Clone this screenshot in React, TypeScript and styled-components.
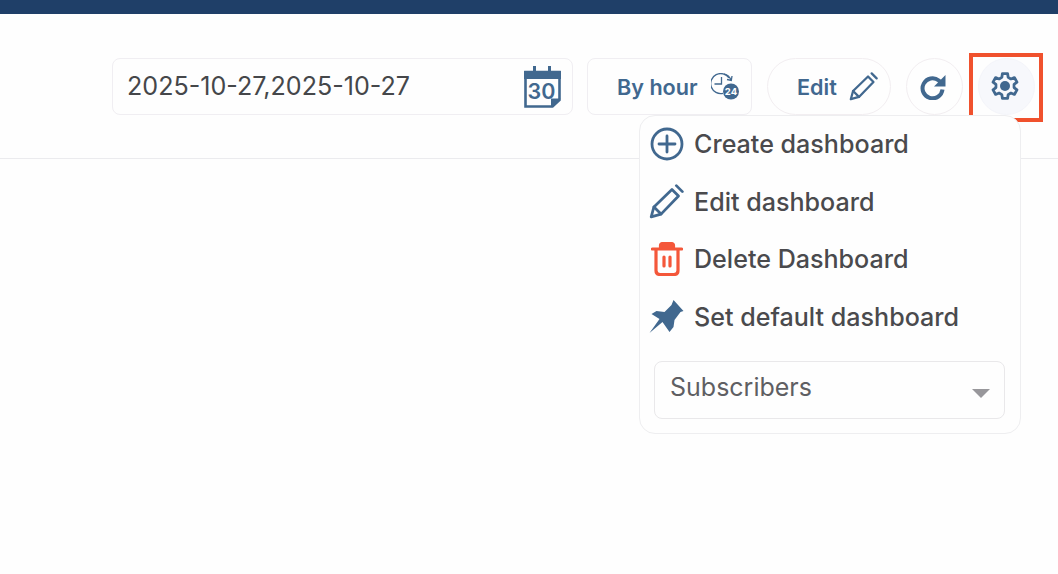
import React from "react";
import styled, { createGlobalStyle } from "styled-components";

const Global = createGlobalStyle`
  html, body { margin: 0; padding: 0; background: #fefefe; }
  body { font-family: Inter, "Liberation Sans", sans-serif; width: 1058px; height: 574px; overflow: hidden; }
`;
const BLUE = "#41688f";
const Page = styled.div`position: relative; width: 1058px; height: 574px;`;
const TopBar = styled.div`height: 14px; background: #1f3f68;`;
const Toolbar = styled.header`
  height: 145px; box-sizing: border-box; border-bottom: 1px solid #ebebee;
  display: flex; align-items: flex-start; gap: 15px;
  padding: 44px 23px 0 112px;
`;
const DateField = styled.div`
  width: 461px; height: 57px; margin-right: -1px; box-sizing: border-box; border: 1px solid #f0eef2; border-radius: 8px;
  display: flex; align-items: center; justify-content: space-between; padding: 0 11px 2px 14px;
  font-size: 25.1px; color: #45474a;
`;
const CalendarIcon = styled.svg`margin-top: 2px;`;
const RangeButton = styled.div`
  width: 165px; height: 57px; box-sizing: border-box; border: 1px solid #f0eef2; border-radius: 8px;
  display: flex; align-items: center; gap: 13px; padding-left: 29px;
  font-size: 21.6px; font-weight: 600; color: ${BLUE};
`;
const PillButton = styled.div`
  width: 124px; height: 57px; box-sizing: border-box; border: 1px solid #f2eef1; border-radius: 29px;
  display: flex; align-items: center; gap: 12px; padding-left: 29px;
  font-size: 21.6px; font-weight: 600; color: ${BLUE};
`;
const RoundButton = styled.div<{ $active?: boolean }>`
  position: relative; width: 57px; height: 57px; box-sizing: border-box; border-radius: 50%;
  border: 1px solid ${p => (p.$active ? "#f4f5fa" : "#f2eef1")};
  background: ${p => (p.$active ? "#f7f8fc" : "transparent")};
  display: flex; align-items: center; justify-content: center;
`;
const RefreshIcon = styled.svg`margin: 0 3px 0 0;`;
const GearIcon = styled.svg`margin: 0 3px 2px 0;`;
const Highlight = styled.div`
  position: absolute; left: -10px; top: -6px; width: 74px; height: 69px; box-sizing: border-box;
  border: 4px solid #f0512d;
`;
const Menu = styled.div`
  position: absolute; left: 639px; top: 115px; width: 382px; height: 319px; box-sizing: border-box;
  border: 1px solid #eeeef0; border-radius: 16px; background: #fefefe;
  padding: 0 15px 0 9px;
`;
const MenuItem = styled.div`
  height: 57.5px; display: flex; align-items: center; gap: 10px; padding-bottom: 1px; margin-bottom: -1px;
  font-size: 25.1px; font-weight: 500; color: #4a4a4d;
  &:first-child { margin-top: -0.5px; }
`;
const IconSlot = styled.span`width: 35px; height: 36px; display: flex; align-items: center; justify-content: center; flex: none;`;
const Select = styled.div`
  margin: 15.5px 0 0 5px; height: 58px; box-sizing: border-box; border: 1px solid #e9e8ea; border-radius: 8px;
  display: flex; align-items: center; justify-content: space-between; padding: 0 14px 6px 15px;
  font-size: 25px; color: #5f5f63;
`;
const Caret = styled.span`
  width: 0; height: 0; margin-top: 12px; border-left: 9px solid transparent; border-right: 9px solid transparent;
  border-top: 9px solid #98979b;
`;

const Pencil = ({ size }: { size: number }) => (
  <svg width={size} height={size} viewBox="0 0 32 32" fill="none" stroke={BLUE} strokeWidth="2.5" strokeLinejoin="round" strokeLinecap="round">
    <path d="M2 30 L4.500 21 L21 5 L27 11 L11 27.500 Z" />
    <path d="M4.500 21 L11 27.500" />
    <path d="M25 1.500 L30.500 7" />
  </svg>
);

const gearPath = (() => {
  const pts: string[] = [];
  for (let k = 0; k < 6; k++) {
    const a = -90 + 60 * k;
    const add = (deg: number, r: number) => {
      const t = ((a + deg) * Math.PI) / 180;
      pts.push(`${(14 + r * Math.cos(t)).toFixed(2)} ${(14 + r * Math.sin(t)).toFixed(2)}`);
    };
    add(-20, 9.2);
    add(-12, 12.6);
    add(12, 12.6);
    add(20, 9.2);
  }
  return `M${pts.join("L")}Z`;
})();

export default function App() {
  return (
    <Page>
      <Global />
      <TopBar />
      <Toolbar>
        <DateField>
          <span>2025-10-27,2025-10-27</span>
          <CalendarIcon width="37" height="42" viewBox="0 0 37 42">
            <path d="M1.500 6h34v28l-7 6.500H1.500z" fill="none" stroke={BLUE} strokeWidth="2.600" />
            <rect x="0" y="5" width="37" height="8" fill={BLUE} />
            <rect x="9" y="0" width="3" height="8" fill={BLUE} />
            <rect x="24" y="0" width="3" height="8" fill={BLUE} />
            <path d="M27 41.500l9.500-9h-9.500z" fill={BLUE} />
            <text x="17.500" y="33" textAnchor="middle" fontFamily="Inter, sans-serif" fontSize="21.500" fontWeight="600" fill={BLUE}>30</text>
          </CalendarIcon>
        </DateField>
        <RangeButton>
          <span>By hour</span>
          <svg width="28" height="27" viewBox="0 0 28 27" fill="none">
            <path d="M18 5A10 10 0 1 0 12 20.300" stroke={BLUE} strokeWidth="1.300" />
            <path d="M13 .8A10 10 0 0 1 20 7M21 3L20.300 7.500L16 6.500" stroke={BLUE} strokeWidth="1.300" />
            <path d="M10.500 4v7H3.500" stroke={BLUE} strokeWidth="1.300" />
            <circle cx="20" cy="18.500" r="8" fill={BLUE} />
            <text x="20" y="22" textAnchor="middle" fontFamily="Inter, sans-serif" fontSize="9.500" fontWeight="700" fill="#fff">24</text>
          </svg>
        </RangeButton>
        <PillButton>
          <span>Edit</span>
          <Pencil size={29} />
        </PillButton>
        <RoundButton>
          <RefreshIcon width="26" height="26" viewBox="0 0 26 26" fill="none" stroke={BLUE} strokeWidth="4">
            <path d="M22.500 15.500A10 10 0 1 1 18.800 6.500L22 9.500" />
            <path d="M25.500 1v11.500H14" fill={BLUE} stroke="none" />
          </RefreshIcon>
        </RoundButton>
        <RoundButton $active>
          <GearIcon width="28" height="28" viewBox="0 0 28 28" fill="none" stroke={BLUE} strokeWidth="2.800" strokeLinejoin="round">
            <path d={gearPath} />
            <circle cx="14" cy="14" r="5" fill={BLUE} stroke="none" />
          </GearIcon>
          <Highlight />
        </RoundButton>
      </Toolbar>
      <Menu>
        <MenuItem>
          <IconSlot>
            <svg width="34" height="34" viewBox="0 0 34 34" fill="none" stroke={BLUE} strokeWidth="2.800" strokeLinecap="round">
              <circle cx="17" cy="17" r="15" />
              <path d="M17 9v16M9 17h16" />
            </svg>
          </IconSlot>
          Create dashboard
        </MenuItem>
        <MenuItem>
          <IconSlot><Pencil size={35} /></IconSlot>
          Edit dashboard
        </MenuItem>
        <MenuItem>
          <IconSlot>
            <svg width="32" height="34" viewBox="0 0 32 34" fill="none" stroke="#f4573a" strokeWidth="3.200" strokeLinecap="round">
              <path d="M1.500 7h29" />
              <path d="M9.500 6V3.500Q9.500 1.500 12 1.500h8q2.500 0 2.500 2V6" fill="#f4573a" />
              <path d="M5 8v20.500q0 4 4 4h14q4 0 4-4V8" />
              <path d="M13 15v9M19 15v9" />
            </svg>
          </IconSlot>
          Delete Dashboard
        </MenuItem>
        <MenuItem>
          <IconSlot>
            <svg width="35" height="34" viewBox="0 0 34 34" fill={BLUE}>
              <path d="M24 0L34 11L31 12L25 20L24 27L20 32L13 22L0 33L10 19L2 14L7 11L15 12L22 5Z" />
            </svg>
          </IconSlot>
          Set default dashboard
        </MenuItem>
        <Select>
          <span>Subscribers</span>
          <Caret />
        </Select>
      </Menu>
    </Page>
  );
}
